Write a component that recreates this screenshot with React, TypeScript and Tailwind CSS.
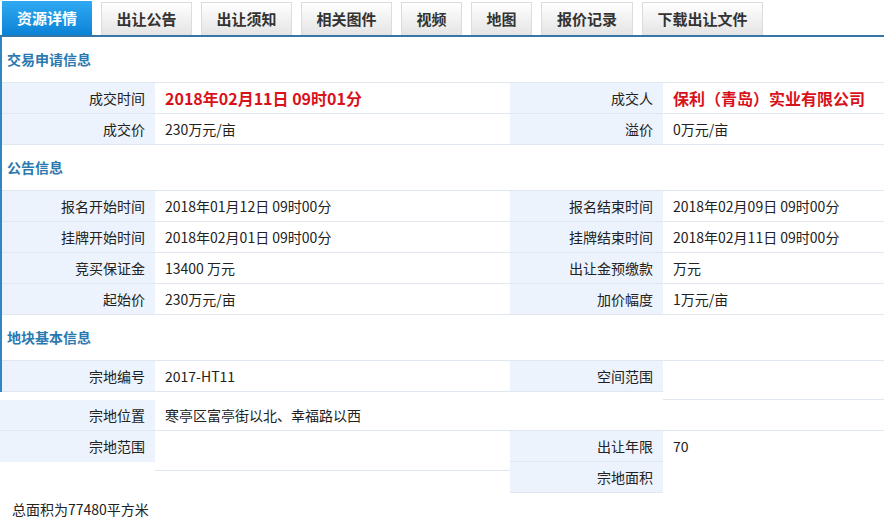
import React from "react";

const font = { fontFamily: '"Noto Sans CJK SC", "Microsoft YaHei", sans-serif' };

const tabs: { t: string; w: string; active?: boolean }[] = [
  { t: "资源详情", w: "w-[90px]", active: true },
  { t: "出让公告", w: "w-[91px]" },
  { t: "出让须知", w: "w-[91px]" },
  { t: "相关图件", w: "w-[91px]" },
  { t: "视频", w: "w-[61px]" },
  { t: "地图", w: "w-[61px]" },
  { t: "报价记录", w: "w-[92px]" },
  { t: "下载出让文件", w: "w-[121px]" },
];

function Header({ children }: { children: React.ReactNode }) {
  return (
    <div className="h-[45px] flex items-center pl-[5px] text-[14px] font-bold text-[#2a79b0]">
      {children}
    </div>
  );
}

function Label({ children, cls = "" }: { children?: React.ReactNode; cls?: string }) {
  return (
    <div className={`h-[31px] bg-[#edf3fc] border-b border-[#e1e7ef] flex items-center justify-end pr-[10px] text-[14px] text-[#222] ${cls}`}>
      {children}
    </div>
  );
}

function Value({ children, cls = "" }: { children?: React.ReactNode; cls?: string }) {
  return (
    <div className={`h-[31px] bg-white border-b border-[#e1e7ef] flex items-center pl-[10px] text-[14px] text-[#222] ${cls}`}>
      {children}
    </div>
  );
}

function Red({ children }: { children: React.ReactNode }) {
  return <span className="text-[16px] font-bold text-[#d8121b]">{children}</span>;
}

export default function App() {
  return (
    <div className="w-[884px] h-[524px] bg-white overflow-hidden" style={font}>
      <div className="flex items-end gap-[9px] pl-[2px] pt-[2px] h-[35px]">
        {tabs.map((tab) =>
          tab.active ? (
            <div
              key={tab.t}
              className={`${tab.w} h-[34px] -mt-[1px] flex items-center justify-center text-[15px] font-bold text-white bg-gradient-to-b from-[#2eaaf2] to-[#0a82d6]`}
            >
              {tab.t}
            </div>
          ) : (
            <div
              key={tab.t}
              className={`${tab.w} h-[33px] flex items-center justify-center text-[15px] font-bold text-[#333] border border-b-0 border-[#dcdcdc] bg-gradient-to-b from-[#ffffff] to-[#e4e4e4]`}
            >
              {tab.t}
            </div>
          )
        )}
      </div>
      <div className="h-[2px] bg-[#3576a6]" />

      <div className="border-l-2 border-[#2f86c3]">
        <Header>交易申请信息</Header>
        <div className="grid grid-cols-[153px_355px_153px_221px] border-t border-[#e1e7ef]">
          <Label>成交时间</Label>
          <Value>
            <Red>2018年02月11日 09时01分</Red>
          </Value>
          <Label>成交人</Label>
          <Value>
            <Red>保利（青岛）实业有限公司</Red>
          </Value>
          <Label>成交价</Label>
          <Value>230万元/亩</Value>
          <Label>溢价</Label>
          <Value>0万元/亩</Value>
        </div>

        <Header>公告信息</Header>
        <div className="grid grid-cols-[153px_355px_153px_221px] border-t border-[#e1e7ef]">
          <Label>报名开始时间</Label>
          <Value>2018年01月12日 09时00分</Value>
          <Label>报名结束时间</Label>
          <Value>2018年02月09日 09时00分</Value>
          <Label>挂牌开始时间</Label>
          <Value>2018年02月01日 09时00分</Value>
          <Label>挂牌结束时间</Label>
          <Value>2018年02月11日 09时00分</Value>
          <Label>竞买保证金</Label>
          <Value>13400 万元</Value>
          <Label>出让金预缴款</Label>
          <Value>万元</Value>
          <Label>起始价</Label>
          <Value>230万元/亩</Value>
          <Label>加价幅度</Label>
          <Value>1万元/亩</Value>
        </div>

        <Header>地块基本信息</Header>
        <div className="grid grid-cols-[153px_355px_153px_221px] grid-rows-[31px] items-start border-t border-[#e1e7ef]">
          <Label>宗地编号</Label>
          <Value>2017-HT11</Value>
          <Label>空间范围</Label>
          <Value cls="h-[39px]" />
        </div>
      </div>

      <div className="mt-[8px]">
        <div className="grid grid-cols-[155px_729px]">
          <Label>宗地位置</Label>
          <Value>寒亭区富亭街以北、幸福路以西</Value>
        </div>
        <div className="grid grid-cols-[155px_355px_374px] items-start">
          <Label cls="border-b-0">宗地范围</Label>
          <Value cls="h-[40px]" />
          <div className="grid grid-cols-[153px_221px]">
            <Label>出让年限</Label>
            <Value cls="border-b-0">70</Value>
            <Label>宗地面积</Label>
            <div />
          </div>
        </div>
        <div className="pl-[12px] pt-[6px] text-[14px] text-[#222]">总面积为77480平方米</div>
      </div>
    </div>
  );
}
